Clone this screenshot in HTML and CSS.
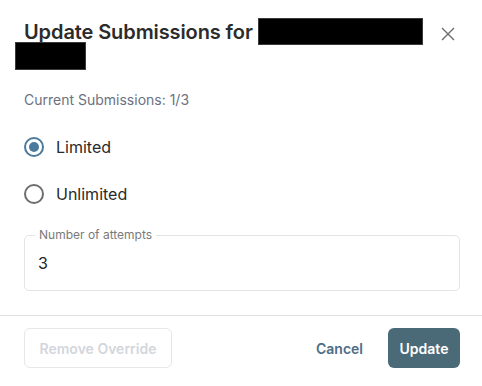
FILE: index.html
```html
<!DOCTYPE html>
<html>
<head>
<meta charset="utf-8">
<link rel="stylesheet" href="styles.css">
</head>
<body>
<div class="dialog">
  <div class="header">
    <h2 class="title">Update Submissions for <span class="redact redact-1"></span><br><span class="redact redact-2"></span></h2>
    <button class="close" aria-label="Close">
      <svg width="14" height="14" viewBox="0 0 14 14"><path d="M1 1L13 13M13 1L1 13" stroke="#6b6b6b" stroke-width="1.4" fill="none"/></svg>
    </button>
  </div>
  <div class="content">
    <p class="current">Current Submissions: 1/3</p>
    <label class="radio-row">
      <span class="radio checked"><span class="dot"></span></span>
      <span class="radio-label">Limited</span>
    </label>
    <label class="radio-row">
      <span class="radio"></span>
      <span class="radio-label">Unlimited</span>
    </label>
    <fieldset class="field">
      <legend class="field-legend">Number of attempts</legend>
      <input class="field-input" type="text" value="3">
    </fieldset>
  </div>
  <div class="footer">
    <button class="btn btn-outline">Remove Override</button>
    <div class="actions">
      <button class="btn btn-text">Cancel</button>
      <button class="btn btn-primary">Update</button>
    </div>
  </div>
</div>
</body>
</html>
```
FILE: styles.css
```css
* { box-sizing: border-box; }
html, body { margin: 0; padding: 0; background: #fff; }
body { font-family: Inter, "Noto Sans", sans-serif; color: #1f1f1f; }

.dialog { width: 482px; height: 386px; background: #fff; }

.header {
  display: flex;
  justify-content: space-between;
  align-items: flex-start;
  padding: 20px 24px 0 24px;
}
.title {
  margin: 0;
  font-size: 20px;
  font-weight: 600;
  line-height: 24px;
  color: #2b2b2b;
  letter-spacing: -0.1px;
}
.redact {
  display: inline-block;
  background: #000;
  border: 1px solid #3a3a3a;
  vertical-align: top;
  height: 27px;
  margin-top: -2px;
  margin-bottom: -1px;
}
.redact-1 { width: 165px; margin-left: 0; }
.redact-2 { width: 71px; margin-left: -9px; height: 28px; }
.close {
  border: 0;
  background: none;
  padding: 0;
  margin-top: 7px;
  margin-right: 3px;
  width: 14px;
  height: 14px;
  display: flex;
  cursor: pointer;
}

.content { padding: 0 22px 0 24px; }
.current {
  margin: 21px 0 0 0;
  font-size: 14px;
  line-height: 20px;
  color: #6b7280;
}
.radio-row {
  display: flex;
  align-items: center;
  gap: 12px;
  height: 47px;
}
.radio-row:first-of-type { margin-top: 13px; }
.radio {
  width: 20px;
  height: 20px;
  border-radius: 50%;
  border: 2px solid #6e6e6e;
  display: flex;
  align-items: center;
  justify-content: center;
  flex: none;
}
.radio.checked { border-color: #4a7b9c; }
.dot { width: 10px; height: 10px; border-radius: 50%; background: #4a7b9c; }
.radio-label { font-size: 16px; color: #2a2a2a; }

.field {
  margin: 11px 0 0 0;
  padding: 0 13px;
  border: 1px solid #e4e4e4;
  border-radius: 5px;
  min-width: 0;
}
.field-legend {
  font-size: 12px;
  line-height: 14px;
  color: #7a7a7a;
  padding: 0 4px;
  margin-left: -3px;
}
.field-input {
  display: block;
  width: 100%;
  height: 48px;
  border: 0;
  outline: none;
  padding: 0 0 7px 0;
  font-family: inherit;
  font-size: 16px;
  color: #222;
  background: transparent;
}

.footer {
  margin-top: 24px;
  border-top: 1px solid #e2e2e2;
  display: flex;
  justify-content: space-between;
  align-items: center;
  padding: 12px 22px 0 24px;
}
.actions { display: flex; align-items: center; gap: 9px; }
.btn {
  font-family: inherit;
  font-size: 14px;
  font-weight: 600;
  height: 40px;
  border-radius: 6px;
  cursor: pointer;
}
.btn-outline {
  width: 148px;
  background: #fff;
  border: 1px solid #e5e7eb;
  color: #d3d6db;
}
.btn-text {
  background: none;
  border: 0;
  color: #4d6d86;
  padding: 0 16px;
}
.btn-primary {
  width: 72px;
  background: #4a6a78;
  border: 0;
  color: #fff;
  padding: 0;
}
```
